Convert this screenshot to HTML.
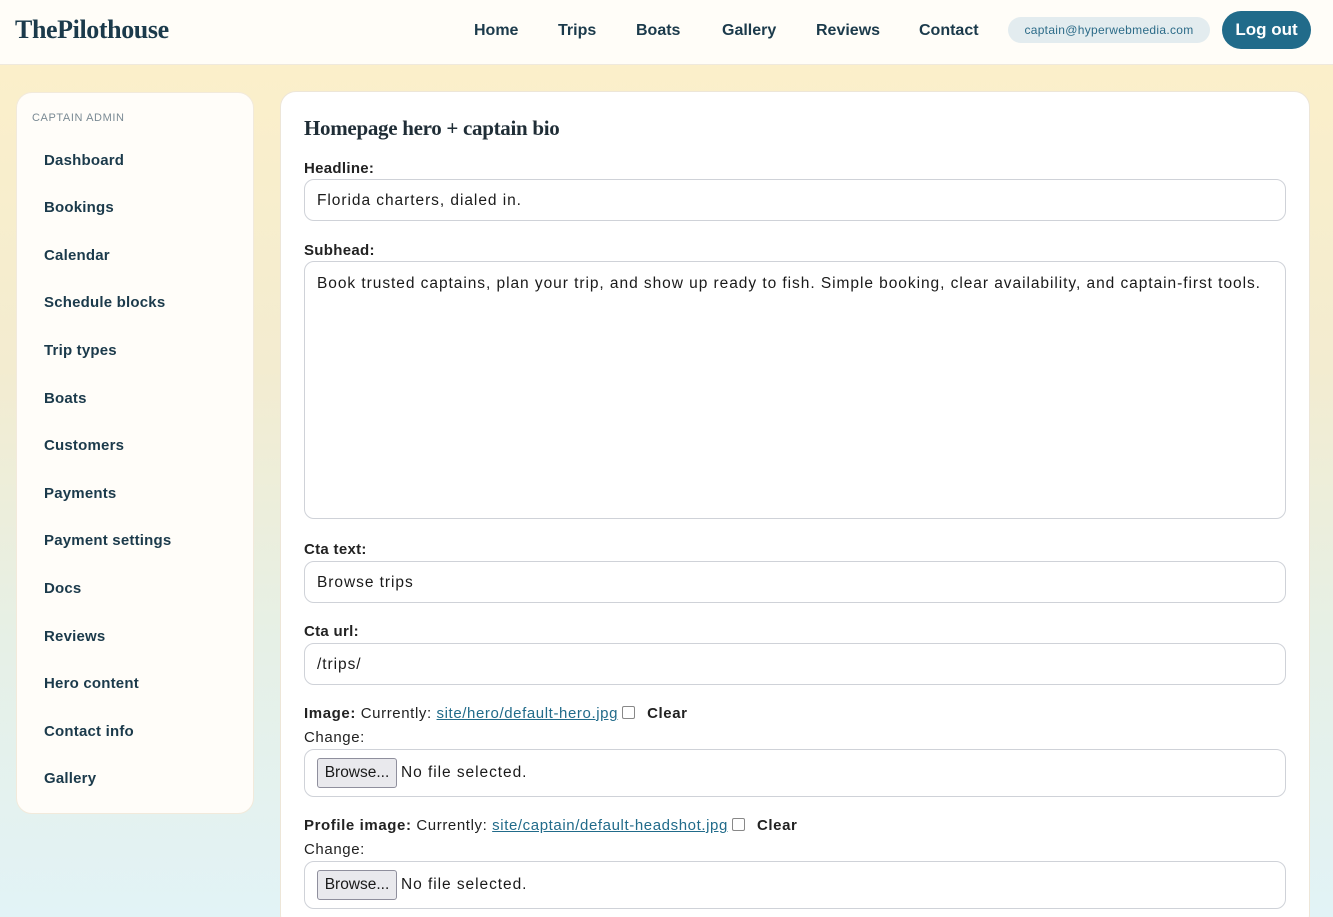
<!DOCTYPE html>
<html><head><meta charset="utf-8"><style>
*{box-sizing:border-box;margin:0;padding:0}
html,body{width:1333px;height:917px;overflow:hidden}
body{font-family:"Liberation Sans",sans-serif;color:#1f2d36;
background:linear-gradient(180deg,#fdf0c9 0%,#f3ecd0 40%,#e6f0e6 70%,#e2f3f6 100%);position:relative}
.hdr{position:absolute;left:0;top:0;width:1333px;height:65px;background:#fffdf8;border-bottom:1px solid #efe9dd}
.logo{position:absolute;left:15px;top:15px;font-family:"Liberation Serif",serif;font-weight:bold;font-size:26px;color:#1b3a4b;letter-spacing:-0.4px}
.nav{position:absolute;top:22px;font-size:16px;font-weight:bold;color:#1b3a4b}
.pill{position:absolute;left:1008px;top:17px;width:202px;height:26px;border-radius:13px;background:#e3ecef;color:#2c6b88;font-size:12px;text-align:center;line-height:26px;letter-spacing:.3px}
.btn{position:absolute;left:1222px;top:11px;width:89px;height:38px;border-radius:19px;background:#216b8a;color:#fff;font-size:17px;font-weight:bold;text-align:center;line-height:38px}
.side{position:absolute;left:16px;top:92px;width:238px;height:722px;border-radius:16px;background:#fffdf9;border:1px solid #f2eadb}
.side .cap{position:absolute;left:15px;top:19px;font-size:11px;color:#7a8a94;letter-spacing:.6px}
.side a{position:absolute;left:27px;font-size:15px;font-weight:bold;color:#1b3a4b;text-decoration:none;letter-spacing:.2px}
.card{position:absolute;left:280px;top:91px;width:1030px;height:840px;border-radius:16px;background:#fff;border:1px solid #ede6d8}
h1{position:absolute;left:304px;top:116px;font-family:"Liberation Serif",serif;font-weight:bold;font-size:21px;color:#1f2d36;letter-spacing:-0.3px}
.lbl{position:absolute;left:304px;font-size:15px;font-weight:bold;color:#222;letter-spacing:.3px}
.in{position:absolute;left:304px;width:982px;border:1px solid #cfd2d8;border-radius:10px;background:#fff;font-size:15.5px;color:#1a1a1a;padding-left:12px;letter-spacing:.95px}
.txt{position:absolute;left:304px;font-size:15px;color:#222;letter-spacing:.6px}
.txt b{font-weight:bold}
.txt u{color:#216b8a}
.cb{display:inline-block;width:13px;height:13px;border:1px solid #888;border-radius:2px;vertical-align:-1px;margin:0 12px 0 4px;background:#fff}
.brw{position:absolute;left:12px;top:8px;width:80px;height:30px;border:1px solid #8f8f9d;border-radius:3px;background:#e9e9ed;font-size:15.5px;line-height:28px;text-align:center;color:#1a1a1a;letter-spacing:0}
</style></head><body>
<div class="hdr">
<div class="logo">ThePilothouse</div>
<div class="nav" style="left:474px">Home</div>
<div class="nav" style="left:558px">Trips</div>
<div class="nav" style="left:636px">Boats</div>
<div class="nav" style="left:722px">Gallery</div>
<div class="nav" style="left:816px">Reviews</div>
<div class="nav" style="left:919px">Contact</div>
<div class="pill">captain@hyperwebmedia.com</div>
<div class="btn">Log out</div>
</div>
<div class="side">
<div class="cap">CAPTAIN ADMIN</div>
<a style="top:59px">Dashboard</a>
<a style="top:106px">Bookings</a>
<a style="top:154px">Calendar</a>
<a style="top:201px">Schedule blocks</a>
<a style="top:249px">Trip types</a>
<a style="top:297px">Boats</a>
<a style="top:344px">Customers</a>
<a style="top:392px">Payments</a>
<a style="top:439px">Payment settings</a>
<a style="top:487px">Docs</a>
<a style="top:535px">Reviews</a>
<a style="top:582px">Hero content</a>
<a style="top:630px">Contact info</a>
<a style="top:677px">Gallery</a>
</div>
<div class="card"></div>
<h1>Homepage hero + captain bio</h1>
<div class="lbl" style="top:160px">Headline:</div>
<div class="in" style="top:179px;height:42px;line-height:42px">Florida charters, dialed in.</div>
<div class="lbl" style="top:242px">Subhead:</div>
<div class="in" style="top:261px;height:258px;padding-top:12px;line-height:20px">Book trusted captains, plan your trip, and show up ready to fish. Simple booking, clear availability, and captain-first tools.</div>
<div class="lbl" style="top:541px">Cta text:</div>
<div class="in" style="top:561px;height:42px;line-height:42px">Browse trips</div>
<div class="lbl" style="top:623px">Cta url:</div>
<div class="in" style="top:643px;height:42px;line-height:42px">/trips/</div>
<div class="txt" style="top:705px"><b>Image:</b> Currently: <u>site/hero/default-hero.jpg</u><span class="cb"></span><b>Clear</b></div>
<div class="txt" style="top:729px">Change:</div>
<div class="in" style="top:749px;height:48px;line-height:46px;padding-left:96px">No file selected.<div class="brw">Browse...</div></div>
<div class="txt" style="top:817px"><b>Profile image:</b> Currently: <u>site/captain/default-headshot.jpg</u><span class="cb"></span><b>Clear</b></div>
<div class="txt" style="top:841px">Change:</div>
<div class="in" style="top:861px;height:48px;line-height:46px;padding-left:96px">No file selected.<div class="brw">Browse...</div></div>
</body></html>
